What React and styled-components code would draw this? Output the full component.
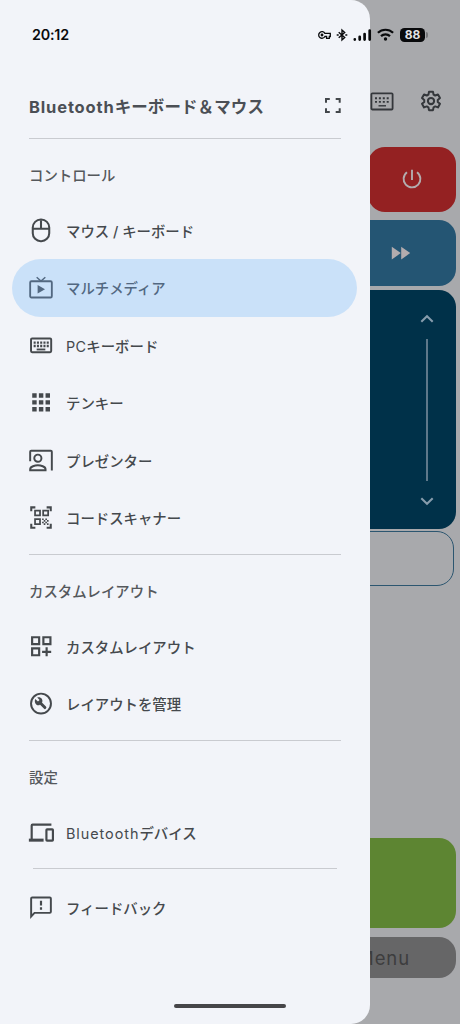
import React from 'react';
import styled, { createGlobalStyle } from 'styled-components';

const GlobalStyle = createGlobalStyle`
  * { box-sizing: border-box; }
  body { margin: 0; background: #a8a9ac; }
`;

const Screen = styled.div`
  position: relative;
  width: 460px;
  height: 1024px;
  overflow: hidden;
  background: #a8a9ac;
  color: #43474b;
  font-family: Inter, 'Noto Sans CJK JP', sans-serif;
`;

const Remote = styled.main`
  display: flex;
  flex-direction: column;
  height: 100%;
  padding: 81px 4px 0 0;
`;

const Toolbar = styled.header`
  display: flex;
  justify-content: flex-end;
  align-items: center;
  gap: 26px;
  height: 40px;
  margin-bottom: 25.5px;
  padding-right: 14px;
  color: #34373b;
`;

const Tile = styled.div`
  display: flex;
  align-items: center;
  justify-content: center;
  align-self: flex-end;
  flex: none;
  width: ${(p) => p.$w}px;
  height: ${(p) => p.$h}px;
  margin-bottom: ${(p) => p.$gap}px;
  border-radius: 17px;
  background: ${(p) => p.$bg};
  color: #b3acae;
`;

const TouchPad = styled(Tile)`
  justify-content: flex-end;
  padding-right: 20px;
`;

const Scroller = styled.div`
  display: flex;
  flex-direction: column;
  align-items: center;
  justify-content: space-between;
  width: 18px;
  height: 100%;
  padding: 21px 0 20.5px;
  color: #869cac;
`;

const Track = styled.div`
  width: 1.5px;
  height: 142px;
  background: #5e788a;
`;

const Field = styled.div`
  flex: none;
  align-self: flex-end;
  width: 420px;
  height: 54.5px;
  margin: 0 2px 252.5px 0;
  border: 1.3px solid #2c5670;
  border-radius: 17px;
`;

const MenuText = styled.span`
  flex: 1;
  padding: 1px 46px 0 0;
  text-align: right;
  font-size: 18.5px;
  letter-spacing: 0.9px;
  color: #3d3d3e;
`;

const Drawer = styled.aside`
  position: absolute;
  top: 0;
  left: 0;
  display: flex;
  flex-direction: column;
  width: 369.5px;
  height: 1024px;
  padding: 74px 12px 0;
  border-radius: 0 19px 19px 0;
  background: #f2f4f9;
`;

const DrawerHead = styled.div`
  display: flex;
  align-items: center;
  justify-content: space-between;
  height: 64px;
  padding: 0 13px 0 17px;
`;

const Title = styled.h1`
  margin: 0;
  padding-top: 1px;
  font-size: 16.5px;
  line-height: 24px;
  font-weight: 700;
  letter-spacing: 0.1px;
  white-space: nowrap;
  color: #4b4f55;
`;

const Latin = styled.span`
  letter-spacing: ${(p) => p.$spacing}px;
  font-weight: ${(p) => p.$weight || 'inherit'};
`;

const Divider = styled.hr`
  flex: none;
  width: ${(p) => (p.$short ? 304 : 312)}px;
  height: 1px;
  margin: 0 0 ${(p) => (p.$short ? 9.3 : 0.3)}px ${(p) => (p.$short ? 21 : 17)}px;
  border: 0;
  background: #c9cbd0;
`;

const SectionLabel = styled.h2`
  display: flex;
  align-items: center;
  flex: none;
  height: 62.7px;
  margin: 0;
  padding: 8px 17px 0;
  font-size: 14.4px;
  font-weight: 500;
  color: #55585c;
`;

const Group = styled.nav`
  display: flex;
  flex-direction: column;
  margin-bottom: ${(p) => p.$gap}px;
`;

const Row = styled.a`
  display: flex;
  align-items: center;
  flex: none;
  gap: 12px;
  width: 345px;
  height: 57.5px;
  padding-left: 16px;
  border-radius: 29px;
  font-size: 14.4px;
  white-space: nowrap;
  background: ${(p) => (p.$active ? '#cae1f9' : 'transparent')};
  color: ${(p) => (p.$active ? '#526881' : '#45494d')};
`;

const RowLabel = styled.span`
  padding-bottom: 1px;
  font-weight: 500;
`;

const Handle = styled.div`
  position: absolute;
  left: 174px;
  bottom: 16px;
  width: 112px;
  height: 4.5px;
  border-radius: 3px;
  background: #464649;
`;

const StatusBar = styled.div`
  position: absolute;
  inset: 0 0 auto 0;
  display: flex;
  align-items: center;
  justify-content: space-between;
  height: 69px;
  padding: 0 32px;
  color: #090a0c;
`;

const Clock = styled.time`
  font-size: 14.3px;
  font-weight: 600;
  letter-spacing: -0.2px;
`;

const Indicators = styled.div`
  display: flex;
  align-items: center;
`;

const Battery = styled.div`
  display: flex;
  align-items: center;
  gap: 1px;
  margin-left: 6px;
  &::after {
    content: '';
    width: 2px;
    height: 6px;
    border-radius: 0 2px 2px 0;
    background: #77787b;
  }
`;

const Charge = styled.span`
  width: 25px;
  height: 14px;
  border-radius: 4.5px;
  background: #090a0c;
  color: #e1e2e4;
  font-size: 12px;
  line-height: 14px;
  font-weight: 700;
  text-align: center;
`;

const Svg = styled.svg`
  display: block;
  flex: none;
  margin-left: ${(p) => p.$lead || 0}px;
  fill: none;
  stroke: currentColor;
  stroke-width: ${(p) => p.$stroke || 2};
`;

const Icon = ({ size = 26, stroke, children }) => (
  <Svg width={size} height={size} viewBox="0 0 24 24" $stroke={stroke}>{children}</Svg>
);

const Mouse = () => (
  <Icon stroke={1.9}><rect x="4.4" y="1.4" width="15.2" height="20" rx="7.4" /><path d="M4.6 10h14.8M12 2v8" /></Icon>
);
const Tv = () => (
  <Icon stroke={1.7}>
    <rect x="2" y="5.8" width="20" height="15" rx="1.2" />
    <path d="M8 2l4 3.6L16 2" strokeWidth="1.3" />
    <path d="M8.9 9.3v7.8l6.8-3.9z" fill="currentColor" stroke="none" />
  </Icon>
);
const Keyboard = () => (
  <Icon stroke={1.8}>
    <rect x="2.8" y="5.1" width="18.6" height="12.6" rx="1" />
    <path d="M5.2 8.8h14M5.2 12h14" strokeDasharray="1.9 1.12" strokeWidth="2.1" />
    <path d="M8 15.2h8" strokeWidth="1.7" />
  </Icon>
);
const Keypad = () => (
  <Icon>
    <path d="M3.9 5.1h16.4M3.9 11.4h16.4M3.9 17.8h16.4" strokeWidth="4.1" strokeDasharray="4.1 2.05" />
  </Icon>
);
const Presenter = () => (
  <Icon stroke={1.8}>
    <path d="M2 12.3V3.5q0-1 1-1h18q1 0 1 1v17.2" />
    <circle cx="9.1" cy="9.4" r="3.3" />
    <path d="M2 20.6v-1.1c0-2.4 4.6-3.5 7.1-3.5s7.1 1.1 7.1 3.5v1.1z" />
  </Icon>
);
const Scanner = () => (
  <Icon stroke={1.9}>
    <path d="M3 5.8V2.2h3.8M17.2 2.2H21v3.6M3 17.4V21h3.8M17.2 21H21v-3.6" />
    <path d="M6.5 5.1h4.6v4.5H6.5zM14 5.1h4.6v4.5H14zM6.5 13.1h4.6v4.5H6.5z" strokeWidth="1.6" />
    <path d="M13 13.1h6M14.5 14.6h6M13 16.1h6M14.5 17.6h6" strokeWidth="1.5" strokeDasharray="1.5 1.5" />
  </Icon>
);
const AddLayout = () => (
  <Icon stroke={2}><path d="M3.8 3h6.5v6.3H3.8zM14.2 3h6.5v6.3h-6.5zM3.8 13.3h6.5v6.3H3.8zM17.2 12.2v8.4M13 16.5h8.4" /></Icon>
);
const Manage = () => (
  <Icon stroke={1.8}>
    <circle cx="12" cy="11.6" r="9.2" />
    <path d="M11.2 10.8l4.4 4.5" strokeWidth="2.7" strokeLinecap="round" />
    <path d="M6.7 7.4l2.5 2.3 1.5-1.5-2.2-2.2c2.9-1 5.6 1.3 4.6 4.3l-2.7 2.8c-3 .8-5-2.7-3.7-5.7z" fill="currentColor" stroke="none" />
  </Icon>
);
const Devices = () => (
  <Icon stroke={2}>
    <path d="M3.4 17.5V5.1q0-.8.8-.8h17.4" />
    <path d="M.8 18.6h13.6" strokeWidth="2.8" />
    <rect x="17" y="8.7" width="6" height="10.3" rx=".6" />
  </Icon>
);
const Feedback = () => (
  <Icon stroke={1.8}>
    <path d="M2.9 19.8V3.3q0-1 1-1h16.2q1 0 1 1v12.2q0 1-1 1H6z" />
    <path d="M12 5.4v4.2M12 11.4v2.2" strokeWidth="2" />
  </Icon>
);
const Expand = () => (
  <Icon size={24} stroke={2}>
    <path d="M5 8.7V4.9h3.8M14.7 4.9h4v3.8M5 14.3v3.8h3.8M14.7 18.1h4v-3.8" />
  </Icon>
);
const KeyboardLight = () => (
  <Icon size={24} stroke={1.8}>
    <rect x="1.4" y="4.3" width="21.2" height="16.2" rx="1" />
    <path d="M5 9.2h14.5M5 12.9h14.5" strokeDasharray="2 1.9" strokeWidth="1.9" />
    <path d="M8.5 16.8h7.5" strokeWidth="1.4" />
  </Icon>
);
const Gear = () => (
  <Icon size={22} stroke={2.2}>
    <circle cx="12" cy="12" r="3.4" />
    <path strokeLinejoin="round" d="M9.8 2h4.4l.6 3 1.8 1 3-1.1 2.2 3.9-2.4 2v2.3l2.4 2-2.2 3.9-3-1.1-1.8 1-.6 3.1H9.8l-.6-3.1-1.8-1-3 1.1-2.2-3.9 2.4-2v-2.3l-2.4-2 2.2-3.9 3 1.1 1.8-1z" />
  </Icon>
);
const Power = () => (
  <Icon size={24} stroke={1.9}><path d="M12 2.7v10.2M7 5.2a8.4 8.4 0 1 0 10 0" /></Icon>
);
const Forward = () => (
  <Icon size={24}><path d="M2.8 5.8v12.6l9-6.3zM12.2 5.8v12.6l9-6.3z" fill="currentColor" stroke="none" /></Icon>
);
const Chevron = ({ down }) => (
  <Svg width="14" height="16" viewBox="0 0 14 16" $stroke={2.1}>
    <path d={down ? 'M1.3 5.3l5.7 5.4 5.7-5.4' : 'M1.3 10.7L7 5.3l5.7 5.4'} />
  </Svg>
);
const KeyMark = () => (
  <Svg width="14" height="10" viewBox="0 0 14 10" $stroke={1.3} $lead={1}>
    <path d="M6.9 3.4A3.3 3.3 0 1 0 6.9 6.5H8.6v1.8h2.7V6.5h1V3.4z" /><circle cx="4" cy="5" r=".8" />
  </Svg>
);
const BluetoothMark = () => (
  <Svg width="12" height="14" viewBox="0 0 12 14" $stroke={1.4} $lead={4}>
    <path d="M2.7 4.2l6 5.4L6 12V2l2.7 2.4-6 5.4" />
    <path d="M.7 7h2M9.3 7h2" strokeWidth="1.6" />
  </Svg>
);
const SignalMark = () => (
  <Svg width="19" height="12" viewBox="0 0 19 12" $stroke={2.7} $lead={5}>
    <path strokeLinecap="round" d="M1.8 10.4v.2M6.7 7.8v2.8M11.6 5v5.6M16.7 1.6v9" />
  </Svg>
);
const WifiMark = () => (
  <Svg width="17" height="13" viewBox="0 0 17 13" $stroke={2.2} $lead={5}>
    <path d="M.9 4.8a11 11 0 0 1 15.2 0M4 8.1a6.5 6.5 0 0 1 9 0" />
    <circle cx="8.5" cy="11" r="1.7" fill="currentColor" stroke="none" />
  </Svg>
);

const controls = [
  [Mouse, 'マウス / キーボード'],
  [Tv, 'マルチメディア', true],
  [Keyboard, <><Latin $spacing={0.3} $weight={400}>PC</Latin>キーボード</>],
  [Keypad, 'テンキー'],
  [Presenter, 'プレゼンター'],
  [Scanner, 'コードスキャナー'],
];
const layouts = [[AddLayout, 'カスタムレイアウト'], [Manage, 'レイアウトを管理']];
const settings = [[Devices, <><Latin $spacing={0.95} $weight={400}>Bluetooth</Latin>デバイス</>]];
const support = [[Feedback, 'フィードバック']];

const Items = ({ items, gap }) => (
  <Group $gap={gap}>
    {items.map(([Glyph, label, active], i) => (
      <Row key={i} $active={active}><Glyph /><RowLabel>{label}</RowLabel></Row>
    ))}
  </Group>
);

export default function App() {
  return (
    <Screen>
      <GlobalStyle />
      <Remote>
        <Toolbar><KeyboardLight /><Gear /></Toolbar>
        <Tile $bg="#942122" $w={88} $h={65.5} $gap={8}><Power /></Tile>
        <Tile $bg="#245573" $w={110} $h={66} $gap={4}><Forward /></Tile>
        <TouchPad $bg="#003149" $w={420} $h={239} $gap={2}>
          <Scroller><Chevron /><Track /><Chevron down /></Scroller>
        </TouchPad>
        <Field />
        <Tile $bg="#5d8532" $w={420} $h={90} $gap={9} />
        <Tile $bg="#666667" $w={140} $h={41} $gap={0}><MenuText>Menu</MenuText></Tile>
      </Remote>
      <Drawer>
        <DrawerHead>
          <Title><Latin $spacing={0.85}>Bluetooth</Latin>キーボード＆マウス</Title>
          <Expand />
        </DrawerHead>
        <Divider />
        <SectionLabel>コントロール</SectionLabel>
        <Items items={controls} gap={7} />
        <Divider />
        <SectionLabel>カスタムレイアウト</SectionLabel>
        <Items items={layouts} gap={7} />
        <Divider />
        <SectionLabel>設定</SectionLabel>
        <Items items={settings} gap={7} />
        <Divider $short />
        <Items items={support} gap={0} />
      </Drawer>
      <StatusBar>
        <Clock>20:12</Clock>
        <Indicators>
          <KeyMark /><BluetoothMark /><SignalMark /><WifiMark />
          <Battery><Charge>88</Charge></Battery>
        </Indicators>
      </StatusBar>
      <Handle />
    </Screen>
  );
}
